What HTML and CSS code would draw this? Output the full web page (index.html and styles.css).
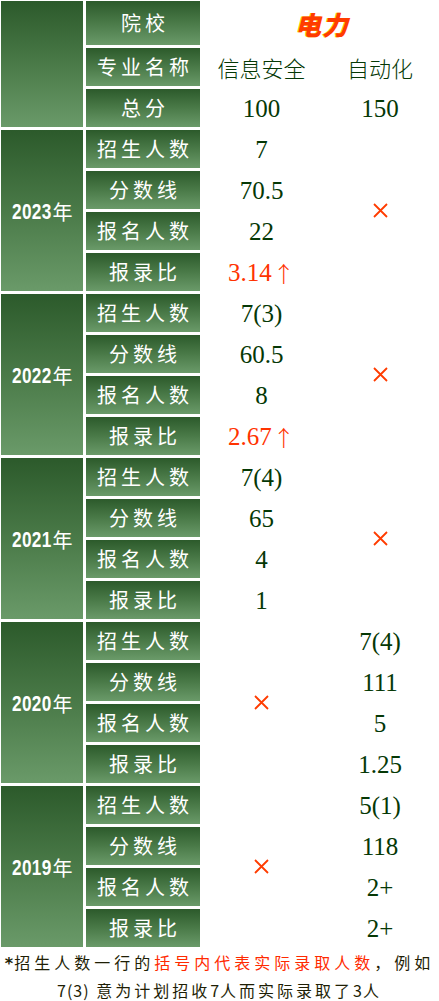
FILE: index.html
```html
<!DOCTYPE html>
<html lang="zh">
<head>
<meta charset="utf-8">
<link rel="stylesheet" href="styles.css">
</head>
<body>
<div class="sheet">
  <div class="cell corner"></div>
  <div class="cell label">院校</div>
  <div class="school">电力</div>

  <div class="cell label">专业名称</div>
  <div class="val c3 zh">信息安全</div>
  <div class="val c4 zh">自动化</div>

  <div class="cell label">总分</div>
  <div class="val c3">100</div>
  <div class="val c4">150</div>

  <!-- 2023 -->
  <div class="cell year"><span class="yn">2023</span>年</div>
  <div class="cell label">招生人数</div>
  <div class="val c3">7</div>
  <div class="val c4 span4"><svg class="cross" viewBox="0 0 15 15"><path d="M1 1L14 14M14 1L1 14"/></svg></div>
  <div class="cell label">分数线</div>
  <div class="val c3">70.5</div>
  <div class="cell label">报名人数</div>
  <div class="val c3">22</div>
  <div class="cell label">报录比</div>
  <div class="val c3 red">3.14<span class="arrow">↑</span></div>

  <!-- 2022 -->
  <div class="cell year"><span class="yn">2022</span>年</div>
  <div class="cell label">招生人数</div>
  <div class="val c3">7(3)</div>
  <div class="val c4 span4"><svg class="cross" viewBox="0 0 15 15"><path d="M1 1L14 14M14 1L1 14"/></svg></div>
  <div class="cell label">分数线</div>
  <div class="val c3">60.5</div>
  <div class="cell label">报名人数</div>
  <div class="val c3">8</div>
  <div class="cell label">报录比</div>
  <div class="val c3 red">2.67<span class="arrow">↑</span></div>

  <!-- 2021 -->
  <div class="cell year"><span class="yn">2021</span>年</div>
  <div class="cell label">招生人数</div>
  <div class="val c3">7(4)</div>
  <div class="val c4 span4"><svg class="cross" viewBox="0 0 15 15"><path d="M1 1L14 14M14 1L1 14"/></svg></div>
  <div class="cell label">分数线</div>
  <div class="val c3">65</div>
  <div class="cell label">报名人数</div>
  <div class="val c3">4</div>
  <div class="cell label">报录比</div>
  <div class="val c3">1</div>

  <!-- 2020 -->
  <div class="cell year"><span class="yn">2020</span>年</div>
  <div class="cell label">招生人数</div>
  <div class="val c3 span4"><svg class="cross" viewBox="0 0 15 15"><path d="M1 1L14 14M14 1L1 14"/></svg></div>
  <div class="val c4">7(4)</div>
  <div class="cell label">分数线</div>
  <div class="val c4">111</div>
  <div class="cell label">报名人数</div>
  <div class="val c4">5</div>
  <div class="cell label">报录比</div>
  <div class="val c4">1.25</div>

  <!-- 2019 -->
  <div class="cell year"><span class="yn">2019</span>年</div>
  <div class="cell label">招生人数</div>
  <div class="val c3 span4"><svg class="cross" viewBox="0 0 15 15"><path d="M1 1L14 14M14 1L1 14"/></svg></div>
  <div class="val c4">5(1)</div>
  <div class="cell label">分数线</div>
  <div class="val c4">118</div>
  <div class="cell label">报名人数</div>
  <div class="val c4">2+</div>
  <div class="cell label">报录比</div>
  <div class="val c4">2+</div>
</div>
<div class="note">
  <p class="line1"><span class="star">*</span>招生人数一行的<span class="hl">括号内代表实际录取人数</span>，例如</p>
  <p class="line2"><span class="lat">7(3)</span> 意为计划招收<span class="lat">7</span>人而实际录取了<span class="lat">3</span>人</p>
</div>
</body>
</html>
```

FILE: styles.css
```css
html, body {
  margin: 0;
  padding: 0;
  background: #ffffff;
}

body {
  width: 439px;
  font-family: "Noto Sans CJK SC", sans-serif;
}

.sheet {
  display: grid;
  grid-template-columns: 82px 114px 117px 114px;
  grid-template-rows: 44px repeat(22, 38px);
  column-gap: 3px;
  row-gap: 3px;
  padding: 1px 0 0 1px;
}

.cell {
  background: linear-gradient(to bottom, #2c5a2b 0%, #4a7a48 50%, #6a9a69 100%);
  color: #ffffff;
  display: flex;
  align-items: center;
  justify-content: center;
}

.corner {
  grid-column: 1;
  grid-row: span 3;
}

.label {
  grid-column: 2;
  font-size: 20px;
  letter-spacing: 4px;
  padding-left: 4px;
  line-height: 1;
}

.year {
  grid-column: 1;
  grid-row: span 4;
  font-size: 20px;
  line-height: 1;
  padding-top: 2px;
}

.yn {
  display: inline-block;
  font-family: "Liberation Sans", sans-serif;
  font-weight: bold;
  font-size: 22px;
  width: 40px;
  text-align: left;
  transform: scaleX(0.78);
  transform-origin: 0 50%;
  letter-spacing: 0.5px;
  margin-right: 1px;
}

.school {
  grid-column: 3 / span 2;
  display: flex;
  align-items: center;
  justify-content: center;
  padding-left: 4px;
  font-size: 26px;
  font-weight: 900;
  font-style: italic;
  color: #ff3c00;
  text-shadow: -1px 0 #ffd200;
  letter-spacing: 1px;
}

.val {
  display: flex;
  align-items: center;
  justify-content: center;
  font-family: "Liberation Serif", "Noto Sans CJK SC", serif;
  font-size: 25px;
  color: #053805;
  line-height: 1;
}

.zh {
  font-family: "Noto Sans CJK SC", sans-serif;
  font-weight: 300;
  font-size: 22px;
}

.c3 { grid-column: 3; }
.c4 { grid-column: 4; }
.span4 { grid-row: span 4; }

.red {
  color: #ff3300;
}

.arrow {
  font-family: "Noto Sans CJK SC", sans-serif;
  font-weight: 300;
  font-size: 22px;
  margin-left: 1px;
}

.cross {
  width: 15px;
  height: 15px;
  fill: none;
  stroke: #ff3c00;
  stroke-width: 1.8;
}

.note {
  padding-top: 2px;
  font-size: 16px;
  line-height: 26px;
  color: #1e1e05;
  letter-spacing: 4px;
}

.note p {
  margin: 0;
  text-align: center;
  white-space: nowrap;
}

.line1 {
  margin-left: -4px;
}

.line2 {
  letter-spacing: 3px;
}

.lat {
  letter-spacing: 1px;
}

.star {
  font-family: "DejaVu Sans", sans-serif;
  font-weight: bold;
  letter-spacing: 1px;
}

.hl {
  color: #ff2a00;
}
```
